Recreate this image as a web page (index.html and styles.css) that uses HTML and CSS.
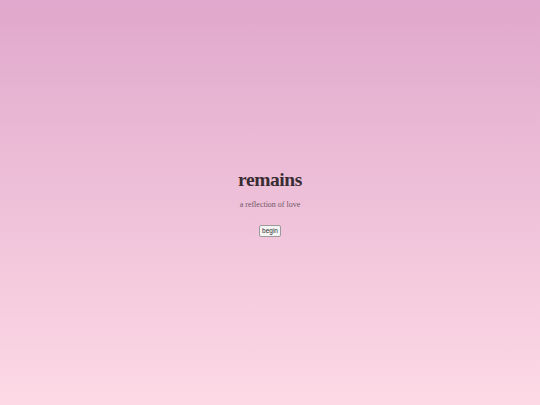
FILE: index.html
```html
<!DOCTYPE html>
<html lang="en">
<head>
    <meta charset="UTF-8">
    <meta name="viewport" content="width=device-width, initial-scale=1.0">
    <title>remains</title>
    <link rel="stylesheet" href="styles.css">
</head>
<body>
    <div class="intro">
        <h1 class="title">remains</h1>
        <p class="subtitle">a reflection of love</p>
        <button class="begin">begin</button>
    </div>
</body>
</html>
```

FILE: styles.css
```css
html, body {
    height: 100%;
}
body {
    margin: 0;
    background: linear-gradient(to bottom, #e0a8cc, #fdd9e5);
    font-family: "Liberation Serif", serif;
}
.intro {
    height: 100%;
    display: flex;
    flex-direction: column;
    align-items: center;
    justify-content: center;
}
.title {
    margin: 0;
    font-size: 19.5px;
    line-height: 22px;
    font-weight: bold;
    color: #3a2c33;
    letter-spacing: -0.4px;
}
.subtitle {
    margin: 9px 0 15px;
    font-size: 8px;
    line-height: 10px;
    color: #6e5766;
}
.begin {
    font-family: "Liberation Sans", Arial, sans-serif;
    font-size: 6.5px;
    line-height: 8px;
    padding: 1px 2px;
    color: #333;
    background: #f4f4f4;
    border: 1px solid #9a9a9a;
    border-radius: 2px;
}
```
